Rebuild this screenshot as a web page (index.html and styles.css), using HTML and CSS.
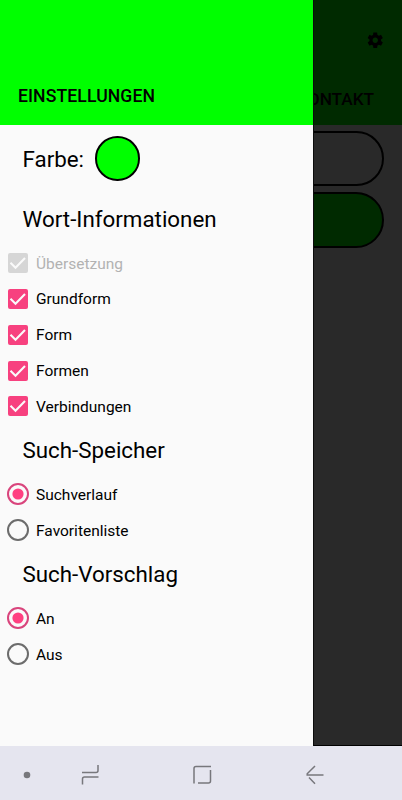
FILE: index.html
```html
<!DOCTYPE html>
<html lang="de">
<head>
<meta charset="utf-8">
<title>Einstellungen</title>
<link rel="stylesheet" href="styles.css">
</head>
<body>
<svg class="defs" width="0" height="0">
  <symbol id="check" viewBox="0 0 22 22"><rect x="1" y="1" width="20" height="20" rx="2" fill="currentColor"/><path d="M3.5 10.800l5 5L18 6.100" fill="none" stroke="#fafafa" stroke-width="2.1"/></symbol>
  <symbol id="on" viewBox="0 0 22 22"><circle cx="11" cy="11" r="10" fill="none" stroke="#d9447c" stroke-width="2"/><circle cx="11" cy="11" r="5.6" fill="#ff4081"/></symbol>
  <symbol id="off" viewBox="0 0 22 22"><circle cx="11" cy="11" r="10" fill="none" stroke="#6c6c6c" stroke-width="2"/></symbol>
</svg>
<div class="screen">
  <aside class="drawer">
    <header class="drawer-head"><span class="title">EINSTELLUNGEN</span></header>
    <div class="color-row"><span class="color-label">Farbe:</span><span class="swatch"></span></div>
    <h2>Wort-Informationen</h2>
    <div class="row disabled"><svg><use href="#check"/></svg><span>Übersetzung</span></div>
    <div class="row"><svg><use href="#check"/></svg><span>Grundform</span></div>
    <div class="row"><svg><use href="#check"/></svg><span>Form</span></div>
    <div class="row"><svg><use href="#check"/></svg><span>Formen</span></div>
    <div class="row"><svg><use href="#check"/></svg><span>Verbindungen</span></div>
    <h2>Such-Speicher</h2>
    <div class="row"><svg><use href="#on"/></svg><span>Suchverlauf</span></div>
    <div class="row"><svg><use href="#off"/></svg><span>Favoritenliste</span></div>
    <h2>Such-Vorschlag</h2>
    <div class="row"><svg><use href="#on"/></svg><span>An</span></div>
    <div class="row"><svg><use href="#off"/></svg><span>Aus</span></div>
  </aside>
  <main class="page">
    <header class="page-head">
      <svg class="gear" viewBox="0 0 24 24"><path fill="#000" d="M19.43 12.98c.04-.32.07-.64.07-.98s-.03-.66-.07-.98l2.11-1.65c.19-.15.24-.42.12-.64l-2-3.46c-.12-.22-.39-.3-.61-.22l-2.49 1c-.52-.4-1.08-.73-1.69-.98l-.38-2.65C14.46 2.18 14.25 2 14 2h-4c-.25 0-.46.18-.49.42l-.38 2.65c-.61.25-1.17.59-1.69.98l-2.49-1c-.23-.09-.49 0-.61.22l-2 3.46c-.13.22-.07.49.12.64l2.11 1.65c-.04.32-.07.65-.07.98s.03.66.07.98l-2.11 1.65c-.19.15-.24.42-.12.64l2 3.46c.12.22.39.3.61.22l2.49-1c.52.4 1.08.73 1.69.98l.38 2.65c.03.24.24.42.49.42h4c.25 0 .46-.18.49-.42l.38-2.65c.61-.25 1.17-.59 1.69-.98l2.49 1c.23.09.49 0 .61-.22l2-3.46c.12-.22.07-.49-.12-.64l-2.11-1.65zM12 15.500c-1.930 0-3.500-1.570-3.500-3.500s1.570-3.500 3.500-3.500 3.500 1.570 3.500 3.500-1.570 3.500-3.500 3.500z"/></svg>
      <span class="tab">KONTAKT</span>
    </header>
    <div class="pill"></div>
    <div class="pill green"></div>
  </main>
</div>
<nav class="navbar">
  <svg width="402" height="54" viewBox="0 0 402 54" fill="none" stroke="#77777c" stroke-width="1.5">
    <circle cx="27" cy="29" r="3.300" fill="#77777c" stroke="none"/>
    <path d="M82 26.500H96Q98 26.500 98 24.500V19M98.500 31H84.500Q82.500 31 82.500 33V38.500"/>
    <path d="M211 20.500H196Q194 20.500 194 22.500V37.500M198 37H208.500Q210.500 37 210.500 35V24"/>
    <path d="M315 20L307.200 27.800V29H323.500M309 31.500L315 37.700"/>
  </svg>
</nav>
</body>
</html>
```

FILE: styles.css
```css
* { box-sizing: border-box; }
body { margin: 0; width: 402px; height: 800px; overflow: hidden; font-family: Roboto, sans-serif; color: #000; }
.defs { display: block; height: 0; }
.screen { display: flex; height: 746px; }
.drawer { width: 313px; background: #fafafa; }
.drawer-head { height: 125px; background: #0f0; padding: 86px 0 0 18px; line-height: 20px; }
.title { font-size: 17.600px; font-weight: 500; letter-spacing: 0.1px; }
.color-row { height: 68px; display: flex; align-items: center; gap: 11px; padding: 0 0 1px 22.500px; font-size: 22.350px; }
.swatch { width: 44.500px; height: 44.500px; border: 2px solid #000; border-radius: 50%; background: #0f0; }
h2 { margin: 0; padding-left: 22.500px; height: 52.3px; line-height: 53px; font-size: 22.350px; font-weight: 400; }
.row { height: 35.8px; display: flex; align-items: center; gap: 7px; padding-left: 7px; font-size: 15.500px; }
.row svg { width: 22px; height: 22px; color: #f7417f; }
.row span { padding-top: 1px; }
.row.disabled { color: #b2b2b2; }
.row.disabled svg { color: #d6d6d6; }
.page { flex: 1; overflow: hidden; background: #292929; border-left: 1px solid #0c0c0c; border-bottom: 1px solid #000; }
.page-head { height: 125px; background: #002a00; display: flex; flex-direction: column; align-items: flex-end; padding: 31px 28px 0 0; margin-left: -1px; }
.gear { width: 18.500px; height: 18.500px; margin-right: -10px; }
.tab { margin-top: 39px; line-height: 20px; font-size: 17.200px; font-weight: 500; }
.pill { height: 55px; width: 170px; margin: 6px 0 0 -100px; border: 2px solid #000; border-radius: 28px; }
.pill.green { background: #002a00; height: 56px; }
.navbar { height: 54px; background: #e5e5ef; }
.navbar svg { display: block; }
```
